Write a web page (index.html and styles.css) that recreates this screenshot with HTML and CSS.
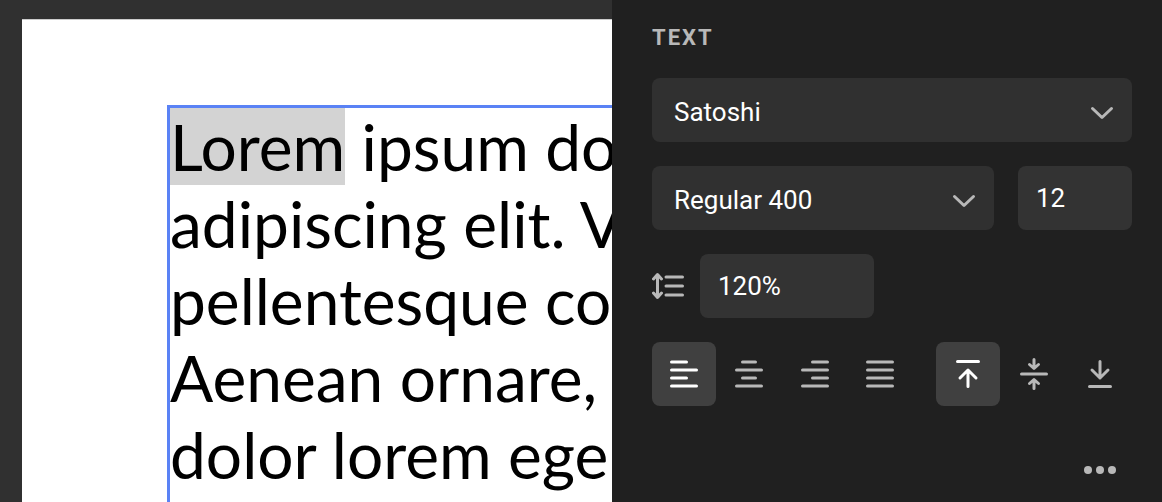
FILE: index.html
```html
<!DOCTYPE html>
<html lang="en">
<head>
    <meta charset="UTF-8">
    <meta name="viewport" content="width=device-width, initial-scale=1.0">
    <title>Text settings</title>
    <link rel="stylesheet" href="styles.css">
</head>
<body>
    <main class="canvas">
        <div class="page">
            <div class="text-frame">
                <p><span class="selected">Lorem</span> ipsum do</p>
                <p>adipiscing elit. V</p>
                <p>pellentesque co</p>
                <p>Aenean ornare,</p>
                <p>dolor lorem ege</p>
            </div>
        </div>
    </main>

    <aside class="panel">
        <h2>Text</h2>

        <form class="settings">
            <div class="select">
                <select aria-label="Font family">
                    <option>Satoshi</option>
                </select>
                <svg class="chevron" viewBox="0 0 24 14"><path d="M2.500 2.500L12 11.500l9.500-9"/></svg>
            </div>

            <div class="row">
                <div class="select">
                    <select aria-label="Font weight">
                        <option>Regular 400</option>
                    </select>
                    <svg class="chevron" viewBox="0 0 24 14"><path d="M2.500 2.500L12 11.500l9.500-9"/></svg>
                </div>
                <input class="size" type="text" value="12" aria-label="Font size">
            </div>

            <div class="row line-height">
                <label for="lineHeight" aria-label="Line height">
                    <svg class="icon" viewBox="0 0 32 32"><path d="M5.500 5v22M1.500 9l4-4.500 4 4.500M1.500 23l4 4.500 4-4.500M14 7h16.500M14 16h16.500M14 25h16.500"/></svg>
                </label>
                <input id="lineHeight" type="text" value="120%">
            </div>

            <div class="row aligns">
                <div class="group">
                    <button type="button" class="active" aria-label="Align left">
                        <svg class="icon" viewBox="0 0 32 32"><path d="M3.500 4h15M3.500 12h25M3.500 20h15M3.500 28h25"/></svg>
                    </button>
                    <button type="button" aria-label="Align center">
                        <svg class="icon" viewBox="0 0 32 32"><path d="M9.500 4h13M3.500 12h25M9.500 20h13M3.500 28h25"/></svg>
                    </button>
                    <button type="button" aria-label="Align right">
                        <svg class="icon" viewBox="0 0 32 32"><path d="M14.500 4h15M4.500 12h25M14.500 20h15M4.500 28h25"/></svg>
                    </button>
                    <button type="button" aria-label="Justify">
                        <svg class="icon" viewBox="0 0 32 32"><path d="M4.500 4h25M4.500 12h25M4.500 20h25M4.500 28h25"/></svg>
                    </button>
                </div>
                <div class="group vertical">
                    <button type="button" class="active" aria-label="Align top">
                        <svg class="icon" viewBox="0 0 32 32"><path d="M5.500 3.500h21M16 28.500V12M8 20l8-8 8 8"/></svg>
                    </button>
                    <button type="button" aria-label="Align middle">
                        <svg class="icon" viewBox="0 0 32 32"><path d="M3.500 16h25M16 1.500V10M11.500 6.500l4.500 4 4.500-4M16 30.500V22M11.500 25.500l4.500-4 4.500 4"/></svg>
                    </button>
                    <button type="button" aria-label="Align bottom">
                        <svg class="icon" viewBox="0 0 32 32"><path d="M5.500 28.500h21M16 3.500V20M8 12l8 8 8-8"/></svg>
                    </button>
                </div>
            </div>

            <button type="button" class="more" aria-label="More options">
                <svg class="icon" viewBox="0 0 32 32"><circle cx="4" cy="16" r="4"/><circle cx="16" cy="16" r="4"/><circle cx="28" cy="16" r="4"/></svg>
            </button>
        </form>
    </aside>
</body>
</html>
```
FILE: styles.css
```css
:root {
    --canvas-bg: #303030;
    --panel-bg: #202020;
    --field-bg: #303030;
    --input-bg: #333333;
    --active-bg: #404040;
    --muted: #b8b8b8;
    --frame: #5a82f5;
}

* {
    margin: 0;
    padding: 0;
    box-sizing: border-box;
}

body {
    display: flex;
    height: 100vh;
    overflow: hidden;
    background: var(--panel-bg);
    font-family: Roboto, sans-serif;
    font-size: 26px;
    color: #fff;
}

/* Canvas */
.canvas {
    flex: 1;
    min-width: 0;
    overflow: hidden;
    display: flex;
    padding: 19px 0 0 22px;
    background: var(--canvas-bg);
}

.page {
    flex: 1;
    min-width: 0;
    display: flex;
    padding: 85px 0 0 145px;
    background: #fff;
    border-top: 1px solid #ccc;
    margin-bottom: -80px;
}

.text-frame {
    flex: 1;
    min-width: 0;
    border: 3px solid var(--frame);
    border-right: none;
    color: #000;
    font-family: Lato, sans-serif;
    font-size: 64px;
    font-weight: 400;
    line-height: 77px;
    white-space: nowrap;
}

.selected {
    display: inline-block;
    background: #d3d3d3;
}

/* Panel */
.panel {
    width: 550px;
    padding: 25px 30px 0 40px;
    background: var(--panel-bg);
}

.panel h2 {
    margin-bottom: 27px;
    font-size: 22px;
    line-height: 26px;
    font-weight: 700;
    letter-spacing: 2px;
    text-transform: uppercase;
    color: var(--muted);
}

.settings {
    display: flex;
    flex-direction: column;
    gap: 24px;
}

.row {
    display: flex;
    align-items: center;
    gap: 24px;
}

.select {
    position: relative;
    flex: 1;
}

select,
input {
    display: block;
    width: 100%;
    height: 64px;
    border: none;
    border-radius: 8px;
    outline: none;
    font: inherit;
    color: inherit;
}

select {
    padding: 4px 60px 0 22px;
    background: var(--field-bg);
    appearance: none;
}

input {
    padding: 0 18px;
    background: var(--input-bg);
}

.chevron {
    position: absolute;
    top: 28px;
    right: 18px;
    width: 24px;
    height: 14px;
    pointer-events: none;
}

svg {
    display: block;
    fill: none;
    stroke: var(--muted);
    stroke-width: 3;
    stroke-linecap: round;
    stroke-linejoin: round;
}

.icon {
    width: 32px;
    height: 32px;
}

.size {
    width: 114px;
}

.line-height {
    gap: 16px;
}

.line-height input {
    width: 174px;
}

.aligns {
    justify-content: space-between;
}

.group {
    display: flex;
    gap: 1px;
}

.vertical {
    gap: 2px;
}

button {
    display: flex;
    align-items: center;
    justify-content: center;
    width: 64px;
    height: 64px;
    border: none;
    border-radius: 8px;
    background: none;
    cursor: pointer;
}

button.active {
    background: var(--active-bg);
}

button.active svg {
    stroke: #fff;
}

.more {
    align-self: flex-end;
    margin-top: 8px;
}

.more svg {
    fill: var(--muted);
    stroke: none;
}
```
